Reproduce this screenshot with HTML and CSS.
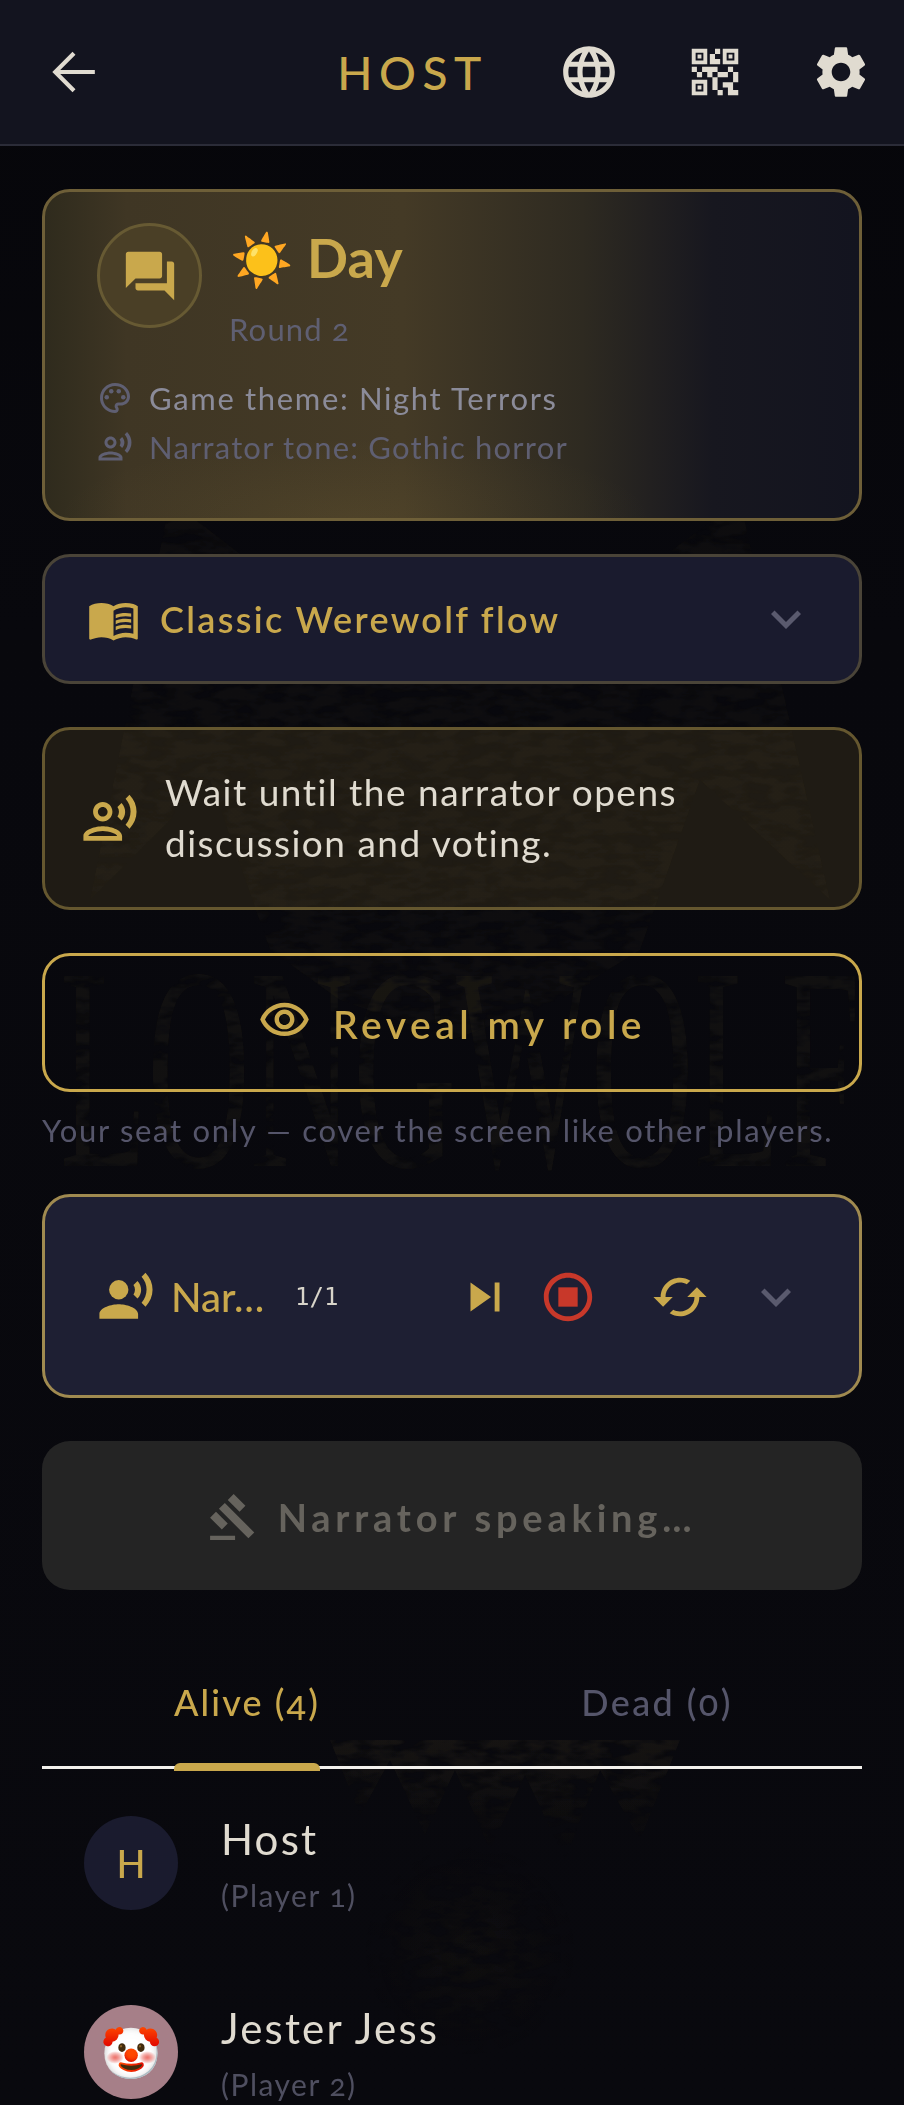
FILE: index.html
```html
<!DOCTYPE html>
<html lang="en">
<head>
<meta charset="utf-8">
<title>Host</title>
<link rel="stylesheet" href="styles.css">
</head>
<body>
<div class="backdrop" aria-hidden="true">
  <svg class="art" viewBox="0 0 904 2105">
    <defs>
      <filter id="grunge" x="0" y="0" width="100%" height="100%">
        <feTurbulence type="fractalNoise" baseFrequency=".035 .09" numOctaves="3" seed="7" result="n"/>
        <feColorMatrix in="n" type="matrix" values="0 0 0 0 0  0 0 0 0 0  0 0 0 0 0  0 0 0 3 -.9" result="m"/>
        <feComposite in="SourceGraphic" in2="m" operator="in"/>
      </filter>
      <linearGradient id="drip" x1="0" y1="0" x2="0" y2="1">
        <stop offset="0" stop-color="#c9a84c" stop-opacity=".07"/>
        <stop offset="1" stop-color="#c9a84c" stop-opacity="0"/>
      </linearGradient>
      <radialGradient id="fleck">
        <stop offset="0" stop-color="#c9a84c" stop-opacity=".035"/>
        <stop offset="1" stop-color="#c9a84c" stop-opacity="0"/>
      </radialGradient>
    </defs>
    <g filter="url(#grunge)">
      <path class="head" d="M90 900 L170 500 L300 600 L452 640 L604 600 L740 500 L830 900 L700 780 L640 950 L560 1000 L452 1040 L340 1000 L270 950 L210 780 Z"/>
      <text class="wordmark" x="60" y="1166" textLength="800" lengthAdjust="spacingAndGlyphs">LONGWOLF</text>
      <path d="M330 1740 L360 1815 L390 1760 L425 1835 L455 1770 L490 1850 L525 1775 L565 1860 L600 1770 L640 1840 L680 1740 Z" fill="url(#drip)"/>
      <ellipse cx="470" cy="1950" rx="110" ry="110" fill="url(#fleck)"/>
    </g>
  </svg>
</div>
<header class="appbar">
  <button class="plain back" aria-label="Back">
    <svg viewBox="0 0 48 48" class="ic-back"><path d="M44 24H8M24 6 6 24l18 18" fill="none" stroke="currentColor" stroke-width="4"/></svg>
  </button>
  <h1 class="title">HOST</h1>
  <button class="plain" aria-label="Language"><svg viewBox="0 0 24 24" class="ic-62"><path d="M11.99 2C6.47 2 2 6.48 2 12s4.47 10 9.99 10C17.52 22 22 17.52 22 12S17.52 2 11.99 2zm6.93 6h-2.95c-.32-1.25-.78-2.45-1.38-3.56 1.84.63 3.37 1.91 4.33 3.56zM12 4.04c.83 1.2 1.48 2.53 1.91 3.96h-3.82c.43-1.43 1.08-2.76 1.91-3.96zM4.26 14C4.1 13.36 4 12.69 4 12s.1-1.36.26-2h3.38c-.08.66-.14 1.32-.14 2 0 .68.06 1.34.14 2H4.26zm.82 2h2.95c.32 1.25.78 2.45 1.38 3.56-1.84-.63-3.37-1.9-4.33-3.56zm2.95-8H5.08c.96-1.66 2.49-2.93 4.33-3.56C8.81 5.55 8.35 6.75 8.03 8zM12 19.96c-.83-1.2-1.48-2.53-1.91-3.96h3.82c-.43 1.43-1.08 2.76-1.91 3.96zM14.34 14H9.66c-.09-.66-.16-1.32-.16-2 0-.68.07-1.35.16-2h4.68c.09.65.16 1.32.16 2 0 .68-.07 1.34-.16 2zm.25 5.56c.6-1.11 1.06-2.31 1.38-3.56h2.95c-.96 1.65-2.49 2.93-4.33 3.56zM16.36 14c.08-.66.14-1.32.14-2 0-.68-.06-1.34-.14-2h3.38c.16.64.26 1.31.26 2s-.1 1.36-.26 2h-3.38z"/></svg></button>
  <button class="plain" aria-label="QR code"><svg viewBox="0 0 24 24" class="ic-62"><path d="M15,21h-2v-2h2V21z M13,14h-2v5h2V14z M21,12h-2v4h2V12z M19,10h-2v2h2V10z M7,12H5v2h2V12z M5,10H3v2h2V10z M12,5h2V3h-2V5z M4.5,4.5v3h3v-3H4.5z M9,9H3V3h6V9z M4.5,16.5v3h3v-3H4.5z M9,21H3v-6h6V21z M16.5,4.5v3h3v-3H16.5z M21,9h-6V3h6V9z M19,19v-3l-4,0v2h2v3h4v-2H19z M17,12l-4,0v2h4V12z M13,10H7v2h2v2h2v-2h2V10z M14,9V7h-2V5h-2v4L14,9z M6.75,5.25h-1.5v1.5h1.5V5.25z M6.75,17.25h-1.5v1.5h1.5V17.25z M18.75,5.25h-1.5v1.5h1.5V5.25z"/></svg></button>
  <button class="plain" aria-label="Settings"><svg viewBox="0 0 24 24" class="ic-62"><path d="M19.14 12.94c.04-.3.06-.61.06-.94 0-.32-.02-.64-.07-.94l2.03-1.58c.18-.14.23-.41.12-.61l-1.92-3.32c-.12-.22-.37-.29-.59-.22l-2.39.96c-.5-.38-1.03-.7-1.62-.94l-.36-2.54c-.04-.24-.24-.41-.48-.41h-3.84c-.24 0-.43.17-.47.41l-.36 2.54c-.59.24-1.13.57-1.62.94l-2.39-.96c-.22-.08-.47 0-.59.22L2.74 8.87c-.12.21-.08.47.12.61l2.03 1.58c-.05.3-.09.63-.09.94s.02.64.07.94l-2.03 1.58c-.18.14-.23.41-.12.61l1.92 3.32c.12.22.37.29.59.22l2.39-.96c.5.38 1.03.7 1.62.94l.36 2.54c.05.24.24.41.48.41h3.84c.24 0 .44-.17.47-.41l.36-2.54c.59-.24 1.13-.56 1.62-.94l2.39.96c.22.08.47 0 .59-.22l1.92-3.32c.12-.22.07-.47-.12-.61l-2.01-1.58zM12 15.6c-1.98 0-3.6-1.62-3.6-3.6s1.62-3.6 3.6-3.6 3.6 1.62 3.6 3.6-1.62 3.6-3.6 3.6z"/></svg></button>
</header>

<main class="content">
  <section class="card phase">
    <div class="phase-head">
      <div class="phase-badge"><svg viewBox="0 0 24 24" class="ic-58"><path d="M21 6h-2v9H6v2c0 .55.45 1 1 1h11l4 4V7c0-.55-.45-1-1-1zm-4 6V3c0-.55-.45-1-1-1H3c-.55 0-1 .45-1 1v14l4-4h10c.55 0 1-.45 1-1z"/></svg></div>
      <div class="phase-text">
        <div class="phase-name"><span class="emoji">☀️</span> Day</div>
        <div class="phase-round">Round 2</div>
      </div>
    </div>
    <div class="meta meta-theme">
      <svg viewBox="0 0 24 24" class="ic-36"><path d="M12 22C6.49 22 2 17.51 2 12S6.49 2 12 2s10 4.04 10 9c0 3.31-2.69 6-6 6h-1.77c-.28 0-.5.22-.5.5 0 .12.05.23.13.33.41.47.64 1.06.64 1.67 0 1.38-1.12 2.5-2.5 2.5zm0-18c-4.41 0-8 3.59-8 8s3.59 8 8 8c.28 0 .5-.22.5-.5 0-.16-.08-.28-.14-.35-.41-.46-.63-1.05-.63-1.65 0-1.38 1.12-2.5 2.5-2.5H16c2.21 0 4-1.79 4-4 0-3.86-3.59-7-8-7z"/><circle cx="6.5" cy="11.5" r="1.5"/><circle cx="9.5" cy="7.5" r="1.5"/><circle cx="14.5" cy="7.5" r="1.5"/><circle cx="17.5" cy="11.5" r="1.5"/></svg>
      <span>Game theme: Night Terrors</span>
    </div>
    <div class="meta meta-tone">
      <svg viewBox="0 0 24 24" class="ic-36"><path d="M9 13c2.21 0 4-1.79 4-4s-1.79-4-4-4-4 1.79-4 4 1.79 4 4 4zm0-6c1.1 0 2 .9 2 2s-.9 2-2 2-2-.9-2-2 .9-2 2-2zm0 8c-2.67 0-8 1.34-8 4v2h16v-2c0-2.66-5.33-4-8-4zm-6 4c.22-.72 3.31-2 6-2 2.7 0 5.8 1.29 6 2H3zM15.08 7.05c.84 1.18.84 2.71 0 3.89l1.68 1.69c2.02-2.02 2.02-5.07 0-7.27l-1.68 1.69zM20.07 2l-1.63 1.63c2.77 3.02 2.77 7.56 0 10.74L20.07 16c3.9-3.89 3.91-9.95 0-14z"/></svg>
      <span>Narrator tone: Gothic horror</span>
    </div>
  </section>

  <section class="card flow">
    <svg viewBox="0 0 24 24" class="ic-53"><path d="M21 5c-1.11-.35-2.33-.5-3.5-.5-1.95 0-4.05.4-5.5 1.5-1.45-1.1-3.55-1.5-5.5-1.5S2.45 4.9 1 6v14.65c0 .25.25.5.5.5.1 0 .15-.05.25-.05C3.1 20.45 5.05 20 6.5 20c1.95 0 4.05.4 5.5 1.5 1.35-.85 3.8-1.5 5.5-1.5 1.65 0 3.35.3 4.75 1.05.1.05.15.05.25.05.25 0 .5-.25.5-.5V6c-.6-.45-1.25-.75-2-1zm0 13.5c-1.1-.35-2.3-.5-3.5-.5-1.7 0-4.15.65-5.5 1.5V8c1.35-.85 3.8-1.5 5.5-1.5 1.2 0 2.4.15 3.5.5v11.5z"/><path d="M17.5 10.5c.88 0 1.73.09 2.5.26V9.24c-.79-.15-1.64-.24-2.5-.24-1.7 0-3.24.29-4.5.83v1.66c1.13-.64 2.7-.99 4.5-.99zM13 12.49v1.66c1.13-.64 2.7-.99 4.5-.99.88 0 1.73.09 2.5.26V11.9c-.79-.15-1.64-.24-2.5-.24-1.7 0-3.24.3-4.5.83zM17.5 14.33c-1.7 0-3.24.29-4.5.83v1.66c1.13-.64 2.7-.99 4.5-.99.88 0 1.73.09 2.5.26v-1.52c-.79-.16-1.64-.24-2.5-.24z"/></svg>
    <span class="flow-label">Classic Werewolf flow</span>
    <svg viewBox="0 0 24 24" class="ic-chev"><path d="M16.59 8.59L12 13.17 7.41 8.59 6 10l6 6 6-6z"/></svg>
  </section>

  <section class="card hint">
    <svg viewBox="0 0 24 24" class="ic-58"><path d="M9 13c2.21 0 4-1.79 4-4s-1.79-4-4-4-4 1.79-4 4 1.79 4 4 4zm0-6c1.1 0 2 .9 2 2s-.9 2-2 2-2-.9-2-2 .9-2 2-2zm0 8c-2.67 0-8 1.34-8 4v2h16v-2c0-2.66-5.33-4-8-4zm-6 4c.22-.72 3.31-2 6-2 2.7 0 5.8 1.29 6 2H3zM15.08 7.05c.84 1.18.84 2.71 0 3.89l1.68 1.69c2.02-2.02 2.02-5.07 0-7.27l-1.68 1.69zM20.07 2l-1.63 1.63c2.77 3.02 2.77 7.56 0 10.74L20.07 16c3.9-3.89 3.91-9.95 0-14z"/></svg>
    <p class="hint-text">Wait until the narrator opens discussion and voting.</p>
  </section>

  <button class="reveal">
    <svg viewBox="0 0 24 24" class="ic-53"><path d="M12 6c3.79 0 7.17 2.13 8.82 5.5C19.17 14.87 15.79 17 12 17s-7.17-2.13-8.82-5.5C4.83 8.13 8.21 6 12 6m0-2C7 4 2.73 7.11 1 11.5 2.73 15.89 7 19 12 19s9.27-3.11 11-7.5C21.27 7.11 17 4 12 4zm0 5c1.38 0 2.5 1.12 2.5 2.5S13.38 14 12 14s-2.5-1.12-2.5-2.5S10.62 9 12 9m0-2c-2.48 0-4.5 2.02-4.5 4.5S9.52 16 12 16s4.5-2.02 4.5-4.5S14.48 7 12 7z"/></svg>
    <span class="reveal-label">Reveal my role</span>
  </button>
  <p class="caption">Your seat only — cover the screen like other players.</p>

  <section class="card narrator">
    <svg viewBox="0 0 24 24" class="ic-58 nar-icon"><circle cx="9" cy="9" r="4"/><path d="M9 15c-2.67 0-8 1.34-8 4v2h16v-2c0-2.66-5.33-4-8-4zm7.76-9.64l-1.68 1.69c.84 1.18.84 2.71 0 3.89l1.68 1.69c2.02-2.02 2.02-5.01 0-7.27zM20.07 2l-1.63 1.63c2.77 3.02 2.77 7.56 0 10.74L20.07 16c3.9-3.89 3.91-9.95 0-14z"/></svg>
    <span class="nar-name">Nar…</span>
    <span class="nar-count">1/1</span>
    <svg viewBox="0 0 24 24" class="ic-58 nar-skip"><path d="M6 18l8.5-6L6 6v12zM16 6v12h2V6h-2z"/></svg>
    <svg viewBox="0 0 24 24" class="ic-58 nar-stop"><path d="M12 2C6.48 2 2 6.48 2 12s4.48 10 10 10 10-4.48 10-10S17.52 2 12 2zm0 18c-4.41 0-8-3.59-8-8s3.59-8 8-8 8 3.59 8 8-3.59 8-8 8z"/><rect x="8" y="8" width="8" height="8"/></svg>
    <svg viewBox="0 0 24 24" class="ic-58 nar-sync"><path d="M19 8l-4 4h3c0 3.31-2.69 6-6 6-1.01 0-1.97-.25-2.8-.7l-1.46 1.46C8.97 19.54 10.43 20 12 20c4.42 0 8-3.58 8-8h3l-4-4zM6 12c0-3.31 2.69-6 6-6 1.01 0 1.97.25 2.8.7l1.46-1.46C15.03 4.46 13.57 4 12 4c-4.42 0-8 3.58-8 8H1l4 4 4-4H6z"/></svg>
    <svg viewBox="0 0 24 24" class="ic-chev nar-chev"><path d="M16.59 8.59L12 13.17 7.41 8.59 6 10l6 6 6-6z"/></svg>
  </section>

  <button class="speaking" disabled>
    <svg viewBox="0 0 24 24" class="ic-50"><path d="M1 21h12v2H1zM5.245 8.07l2.83-2.827 14.14 14.142-2.828 2.828zM12.317 1l5.657 5.656-2.83 2.83-5.654-5.66zM3.825 9.485l5.657 5.657-2.828 2.828-5.657-5.657z"/></svg>
    <span>Narrator speaking…</span>
  </button>

  <nav class="tabs">
    <div class="tab active"><span class="tab-label">Alive (4)</span></div>
    <div class="tab"><span class="tab-label">Dead (0)</span></div>
  </nav>

  <ul class="players">
    <li class="player">
      <div class="avatar avatar-host">H</div>
      <div class="who"><div class="name">Host</div><div class="sub">(Player 1)</div></div>
    </li>
    <li class="player">
      <div class="avatar avatar-jester"><span class="emoji">🤡</span></div>
      <div class="who"><div class="name">Jester Jess</div><div class="sub">(Player 2)</div></div>
    </li>
  </ul>
</main>
</body>
</html>
```
FILE: styles.css
```css
* { box-sizing: border-box; }
html, body { margin: 0; padding: 0; }
body {
  position: relative;
  width: 904px;
  height: 2105px;
  overflow: hidden;
  background: linear-gradient(180deg, #06060a 0, #08080d 30%, #09090e 100%);
  color: #e0dbd0;
  font-family: Lato, "Noto Sans", sans-serif;
  font-variant-numeric: oldstyle-nums;
}
button { font-family: inherit; }
svg { fill: currentColor; flex: none; display: block; }
p, h1, ul { margin: 0; padding: 0; }
ul { list-style: none; }

.backdrop { position: absolute; inset: 0; pointer-events: none; overflow: hidden; }
.art { width: 904px; height: 2105px; }
.head { fill: #c9a84c; opacity: .035; }
.wordmark {
  font-family: "Liberation Serif", serif;
  font-size: 290px;
  fill: #c9a84c;
  opacity: .05;
}

.plain {
  background: none;
  border: 0;
  padding: 0;
  color: #e0dbd0;
  display: flex;
}
.appbar {
  position: relative;
  height: 146px;
  background: #13141f;
  border-bottom: 2px solid #2b2c38;
  display: flex;
  align-items: center;
  padding: 0 32px 0 49px;
  gap: 64px;
}
.ic-back { width: 50px; height: 50px; }
.title {
  margin-left: auto;
  margin-right: 6px;
  font-size: 46px;
  font-weight: 500;
  letter-spacing: 6.6px;
  color: #c9a84c;
}
.ic-62 { width: 62px; height: 62px; }
.ic-58 { width: 58px; height: 58px; }
.ic-53 { width: 53px; height: 53px; }
.ic-50 { width: 50px; height: 50px; }
.ic-36 { width: 36px; height: 36px; }
.ic-chev { width: 60px; height: 60px; color: #5a5a6e; }

.content {
  position: relative;
  padding: 43px 42px 0;
  display: flex;
  flex-direction: column;
}
.card {
  border-radius: 28px;
  border: 3px solid #4a4438;
}
.phase {
  height: 332px;
  border-color: #6e5f38;
  background:
    radial-gradient(ellipse 300px 80px at 38% 100%, rgba(201, 168, 76, .08), rgba(201, 168, 76, 0)),
    linear-gradient(90deg, #2f2b1d 0%, #3f3624 10%, #443a26 44%, #2e2a21 66%, #17171f 82%, #13141f 100%);
  padding: 31px 0 0 52px;
}
.phase-head { display: flex; gap: 28px; align-items: flex-start; }
.phase-badge {
  width: 105px;
  height: 105px;
  border-radius: 50%;
  border: 3px solid #675a33;
  background: #4a3f26;
  color: #c9a84c;
  display: flex;
  align-items: center;
  justify-content: center;
}
.phase-text { margin-top: 0; }
.phase-name {
  font-size: 54px;
  line-height: 70px;
  font-weight: 700;
  color: #c9a84c;
}
.phase-name .emoji { font-size: 51px; font-weight: 400; }
.phase-round {
  font-size: 31px;
  line-height: 40px;
  margin-top: 15px;
  margin-left: -1px;
  color: #5f5f72;
  letter-spacing: 1.2px;
}
.meta {
  display: flex;
  align-items: center;
  gap: 15px;
  font-size: 31px;
  height: 49px;
}
.meta svg { margin-left: 0; }
.meta span { margin-left: 1px; }
.meta-theme { margin-top: 24px; color: #8b8b99; letter-spacing: 1.65px; }
.meta-theme svg { color: #5f5f72; }
.meta-tone { color: #5f5f72; letter-spacing: 1.2px; }

.flow {
  margin-top: 33px;
  height: 130px;
  background: #1a1b2e;
  color: #c9a84c;
  display: flex;
  align-items: center;
  padding: 0 43px 0 42px;
  gap: 20px;
}
.flow-label {
  flex: 1;
  font-size: 36px;
  font-weight: 600;
  letter-spacing: 2.3px;
}

.hint {
  margin-top: 43px;
  height: 183px;
  background: rgba(201, 168, 76, .12);
  border-color: #65572f;
  display: flex;
  align-items: center;
  gap: 26px;
  padding: 0 36px;
  color: #c9a84c;
}
.hint-text {
  color: #e0dbd0;
  font-size: 37px;
  line-height: 51px;
  letter-spacing: 1.5px;
  width: 600px;
  margin-top: -4px;
}

.reveal {
  margin-top: 43px;
  height: 139px;
  border: 3px solid #c9a84c;
  border-radius: 28px;
  background: none;
  color: #c9a84c;
  font-size: 39px;
  font-weight: 600;
  letter-spacing: 4.5px;
  display: flex;
  align-items: center;
  justify-content: center;
  gap: 22px;
}
.reveal-label { margin-top: 2px; }
.reveal svg { margin-top: -4px; }
.caption {
  margin-top: 18px;
  font-size: 31px;
  line-height: 40px;
  letter-spacing: 1.7px;
  color: #55556a;
  white-space: nowrap;
}

.narrator {
  margin-top: 44px;
  height: 204px;
  border-color: #a08a50;
  background: #1e1f33;
  color: #c9a84c;
  display: flex;
  align-items: center;
  padding: 2px 0 0 52px;
}
.nar-name {
  margin-left: 16px;
  font-size: 40px;
  font-weight: 500;
  width: 124px;
}
.nar-count {
  font-family: "DejaVu Sans Mono", monospace;
  font-size: 24px;
  color: #d8d4ca;
}
.nar-skip { margin-left: 118px; }
.nar-stop { margin-left: 25px; color: #c8382a; }
.nar-sync { margin-left: 54px; }
.nar-chev { margin-left: 37px; }

.speaking {
  margin-top: 43px;
  height: 149px;
  border: 0;
  border-radius: 28px;
  padding-top: 4px;
  background: #242424;
  color: #66635d;
  font-size: 38px;
  font-weight: 700;
  letter-spacing: 4.8px;
  display: flex;
  align-items: center;
  justify-content: center;
  gap: 20px;
}

.tabs {
  margin-top: 62px;
  height: 117px;
  border-bottom: 3px solid #f2f0ec;
  display: flex;
}
.tab {
  flex: 1;
  display: flex;
  justify-content: center;
  color: #55556a;
  font-size: 36px;
  font-weight: 500;
  letter-spacing: 2.4px;
}
.tab-label {
  position: relative;
  padding-top: 28px;
  height: 117px;
}
.tab.active { color: #c9a84c; letter-spacing: 2.1px; }
.tab.active .tab-label::after {
  content: "";
  position: absolute;
  left: 0;
  right: 0;
  bottom: -2px;
  height: 8px;
  background: #c9a84c;
  border-radius: 6px 6px 0 0;
}

.players { display: flex; flex-direction: column; margin-top: 47px; gap: 95px; padding-left: 42px; }
.player { display: flex; gap: 43px; align-items: flex-start; height: 94px; }
.avatar {
  width: 94px;
  height: 94px;
  border-radius: 50%;
  display: flex;
  align-items: center;
  justify-content: center;
  flex: none;
}
.avatar-host { background: #1a1b2e; color: #c9a84c; font-size: 38px; font-weight: 500; }
.avatar-jester { background: #a67f88; }
.avatar-jester .emoji { font-size: 50px; line-height: 94px; }
.who { margin-top: -5px; }
.name { font-size: 42px; line-height: 56px; letter-spacing: 2.2px; }
.sub { font-size: 30px; line-height: 40px; margin-top: 8px; color: #4f4f60; letter-spacing: 1.5px; }
```
